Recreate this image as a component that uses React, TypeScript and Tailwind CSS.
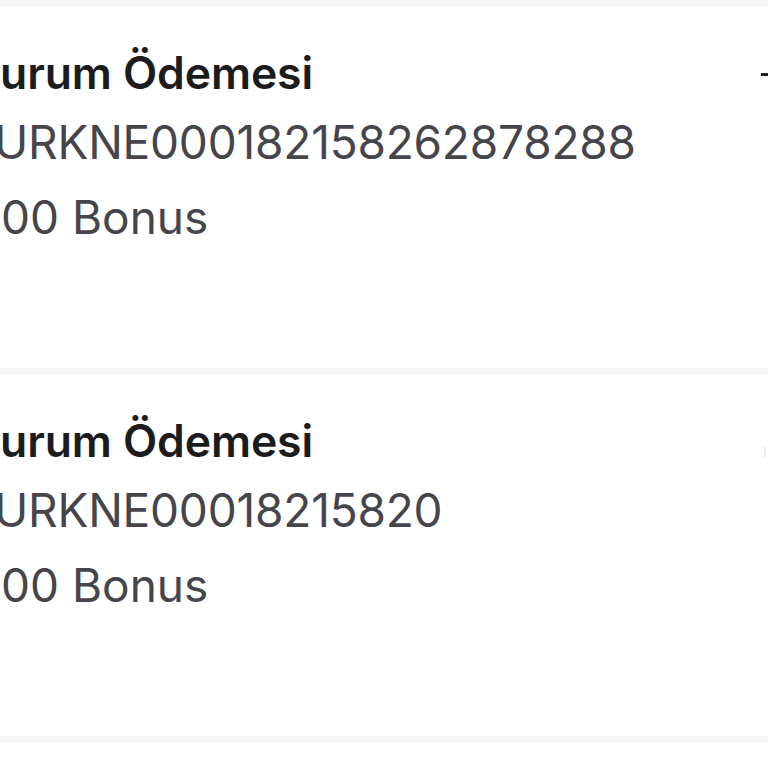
export default function App() {
  const cards = [
    { id: "URKNE000182158262878288", sign: "dash" },
    { id: "URKNE00018215820", sign: "faint" },
  ];
  return (
    <div className="w-[768px] h-[768px] overflow-hidden bg-[#f5f5f7] pt-[6px] flex flex-col gap-[6px]" style={{ fontFamily: "Inter, 'Noto Sans', sans-serif" }}>
      {cards.map((c, i) => (
        <div key={i} className="h-[362px] shrink-0 bg-white flex justify-between overflow-hidden">
          <div className="flex flex-col pt-[41px] min-w-0">
            <div className="text-[44.5px] leading-[52px] font-semibold text-[#1c1c1e] tracking-[-0.1px] whitespace-nowrap">urum Ödemesi</div>
            <div className="text-[46px] leading-[60px] mt-[13px] text-[#45454b] ml-[-6px] tracking-[-0.2px] whitespace-nowrap">{c.id}</div>
            <div className="text-[46px] leading-[60px] mt-[15px] text-[#45454b] ml-[1px] whitespace-nowrap">00 Bonus</div>
          </div>
          <div className="pt-[67px] w-[8px] shrink-0">
            {c.sign === "dash" ? (
              <div className="w-[8px] h-[3px] bg-[#1c1c1e] ml-[1px]" />
            ) : (
              <div className="w-[2px] h-[10px] bg-[#ececef] ml-[4px] mt-[6px]" />
            )}
          </div>
        </div>
      ))}
      <div className="flex-1 bg-white" />
    </div>
  );
}
